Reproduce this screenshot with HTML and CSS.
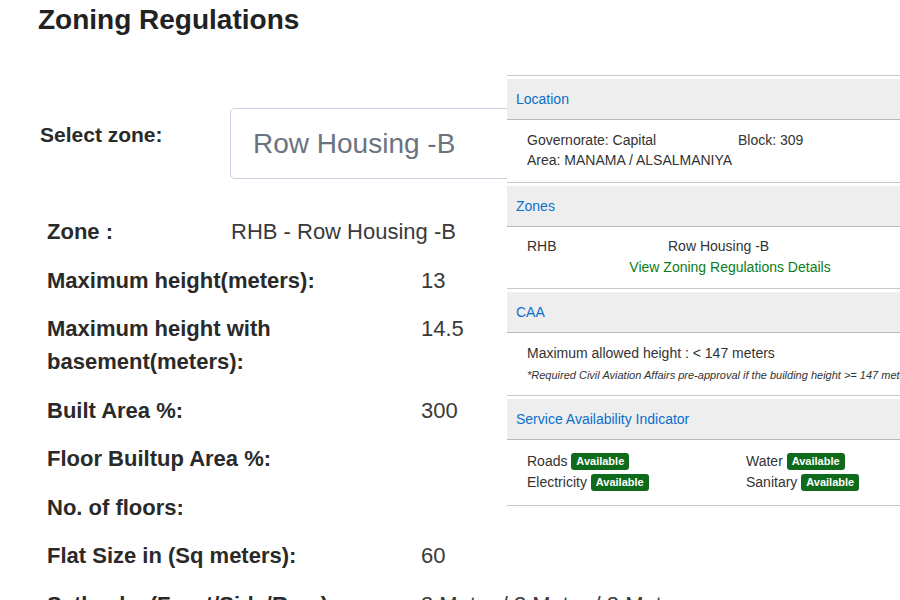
FILE: index.html
```html
<!DOCTYPE html>
<html lang="en">
<head>
    <meta charset="UTF-8">
    <meta name="viewport" content="width=device-width, initial-scale=1.0">
    <title>Zoning Regulations</title>
    <link rel="stylesheet" href="styles.css">
</head>
<body>
    <div class="page">
        <h1>Zoning Regulations</h1>

        <div class="select-row">
            <label for="zone">Select zone:</label>
            <div class="select-box" id="zone">Row Housing -B</div>
        </div>

        <div class="details">
            <div class="row row-zone">
                <div class="label">Zone :</div>
                <div class="value">RHB - Row Housing -B</div>
            </div>
            <div class="row">
                <div class="label">Maximum height(meters):</div>
                <div class="value">13</div>
            </div>
            <div class="row">
                <div class="label">Maximum height with basement(meters):</div>
                <div class="value">14.5</div>
            </div>
            <div class="row">
                <div class="label">Built Area %:</div>
                <div class="value">300</div>
            </div>
            <div class="row">
                <div class="label">Floor Builtup Area %:</div>
                <div class="value"></div>
            </div>
            <div class="row">
                <div class="label">No. of floors:</div>
                <div class="value"></div>
            </div>
            <div class="row">
                <div class="label">Flat Size in (Sq meters):</div>
                <div class="value">60</div>
            </div>
            <div class="row">
                <div class="label">Setbacks (Front/Side/Rear):</div>
                <div class="value">3 Meter / 3 Meter / 3 Meter</div>
            </div>
        </div>
    </div>

    <!-- info popup shown over the page -->
    <div class="info-panel">
        <div class="section">
            <div class="section-head">Location</div>
            <div class="section-body location">
                <div class="grid grid-location">
                    <span>Governorate: Capital</span>
                    <span>Block: 309</span>
                </div>
                <div>Area: MANAMA / ALSALMANIYA</div>
            </div>
        </div>
        <div class="section">
            <div class="section-head">Zones</div>
            <div class="section-body zones">
                <div class="grid grid-zones">
                    <span>RHB</span>
                    <span>Row Housing -B</span>
                </div>
                <a class="details-link" href="#">View Zoning Regulations Details</a>
            </div>
        </div>
        <div class="section">
            <div class="section-head">CAA</div>
            <div class="section-body caa">
                <div>Maximum allowed height : &lt; 147 meters</div>
                <div class="note">*Required Civil Aviation Affairs pre-approval if the building height &gt;= 147 meters</div>
            </div>
        </div>
        <div class="section">
            <div class="section-head">Service Availability Indicator</div>
            <div class="section-body services">
                <div class="grid grid-services">
                    <span>Roads <span class="badge">Available</span></span>
                    <span>Water <span class="badge">Available</span></span>
                    <span>Electricity <span class="badge">Available</span></span>
                    <span>Sanitary <span class="badge">Available</span></span>
                </div>
            </div>
        </div>
    </div>
</body>
</html>
```

FILE: styles.css
```css
* {
    box-sizing: border-box;
}
body, html {
    margin: 0;
    padding: 0;
    background: #fff;
    font-family: "Liberation Sans", Arial, sans-serif;
    overflow: hidden;
}
body {
    position: relative;
    height: 600px;
}
.page {
    padding-left: 38px;
    width: 900px;
}
h1 {
    margin: 4px 0 0;
    font-size: 28px;
    line-height: 32px;
    font-weight: bold;
    color: #222;
}
.select-row {
    display: flex;
    align-items: flex-start;
    margin-top: 72px;
    padding-left: 2px;
}
.select-row label {
    width: 190px;
    margin-top: 15px;
    font-size: 21px;
    line-height: 24px;
    font-weight: bold;
    color: #2a2a2a;
}
.select-box {
    width: 560px;
    height: 71px;
    padding: 0 22px;
    border: 1px solid #c8d3e2;
    border-radius: 5px;
    font-size: 28px;
    line-height: 69px;
    color: #6b747e;
}
.details {
    margin-top: 36px;
    padding-left: 9px;
}
.row {
    display: grid;
    grid-template-columns: 374px 1fr;
    margin-bottom: 15.5px;
    font-size: 22px;
    line-height: 33px;
}
.row-zone {
    grid-template-columns: 184px 1fr;
}
.label {
    font-weight: bold;
    color: #2a2a2a;
}
.value {
    color: #3a3a3a;
    white-space: nowrap;
}

/* popup */
.info-panel {
    position: absolute;
    left: 507px;
    top: 75px;
    width: 446px;
    padding-bottom: 3px;
    background: #fff;
    border-bottom: 1px solid #c8c8c8;
    font-size: 14px;
    color: #333;
}
.section {
    border-top: 1px solid #c8c8c8;
    padding-top: 3px;
}
.section-head {
    height: 41px;
    padding-left: 9px;
    background: #eeeeee;
    border-bottom: 1px solid #b9b9b9;
    line-height: 40px;
    color: #0a6fcc;
}
.section-body {
    padding: 10px 20px 12px;
    line-height: 20px;
}
.grid {
    display: grid;
}
.grid-location {
    grid-template-columns: 211px 1fr;
}
.zones {
    padding: 9px 20px 10px;
    line-height: 21px;
}
.grid-zones {
    grid-template-columns: 141px 1fr;
}
.details-link {
    display: block;
    text-align: center;
    color: #0b7c17;
    text-decoration: none;
}
.caa {
    padding: 10px 0 11px 20px;
}
.note {
    margin-top: 3px;
    font-size: 11px;
    line-height: 18px;
    font-style: italic;
    white-space: nowrap;
}
.services {
    padding: 11px 20px 9px;
    line-height: 21px;
}
.grid-services {
    grid-template-columns: 219px 1fr;
}
.badge {
    display: inline-block;
    padding: 2px 5px;
    border-radius: 3px;
    background: #0f6a1c;
    color: #fff;
    font-size: 11px;
    line-height: 13px;
    font-weight: bold;
    vertical-align: 1px;
}
```
